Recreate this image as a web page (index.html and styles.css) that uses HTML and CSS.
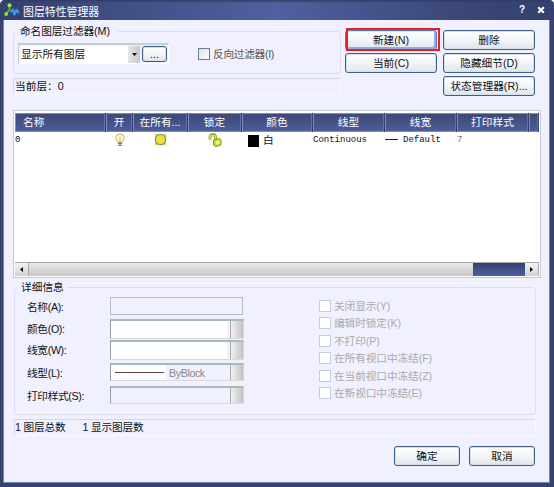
FILE: index.html
```html
<!DOCTYPE html>
<html lang="zh-CN">
<head>
<meta charset="utf-8">
<title>图层特性管理器</title>
<link rel="stylesheet" href="styles.css">
</head>
<body>
<div class="window">
  <header class="titlebar">
    <svg class="logo" width="16" height="16" viewBox="0 0 16 16"><path d="M5.500 3v6M5 8L2.500 11.500" fill="none" stroke="#4fae3a" stroke-width="2"/><circle cx="5.500" cy="3.200" r="2" fill="#a4e83c"/><circle cx="2.200" cy="12" r="1.900" fill="#8fdc3a"/><path d="M6.500 10l2.500-2.500 1.500 5L12.500 8l2.500 3" fill="none" stroke="#3399ec" stroke-width="2.300" stroke-linejoin="round"/></svg>
    <h1>图层特性管理器</h1>
    <span class="help">?</span>
    <svg class="close" width="8" height="8" viewBox="0 0 8 8"><path d="M1.200 1.200l5.600 5.600M6.800 1.200L1.200 6.800" stroke="#fff" stroke-width="2.200"/></svg>
  </header>
  <main>
    <section class="top">
      <div class="top-left">
        <fieldset class="filter">
          <legend>命名图层过滤器(M)</legend>
          <div class="filter-row">
            <div class="select-wrap">
              <div class="select"><span>显示所有图层</span><i class="drop"><svg width="5" height="3"><path d="M0 0h5L2.500 3z"/></svg></i></div>
              <button class="more">...</button>
            </div>
            <label class="invert"><i class="box dark"></i>反向过滤器(I)</label>
          </div>
        </fieldset>
        <div class="panel current">当前层：<span class="zero">0</span></div>
      </div>
      <div class="actions">
        <button class="primary">新建(N)</button>
        <button>删除</button>
        <button>当前(C)</button>
        <button>隐藏细节(D)</button>
        <button class="last">状态管理器(R)...</button>
      </div>
    </section>

    <section class="list">
      <div class="cols head">
        <span class="first">名称</span><span>开</span><span>在所有...</span><span>锁定</span><span>颜色</span><span>线型</span><span>线宽</span><span>打印样式</span><span></span>
      </div>
      <div class="cols row">
        <span class="mono">0</span>
        <span class="icon"><svg width="12" height="14" viewBox="0 0 12 14"><path d="M4 9L2.200 6.500C1 3.500 3 1.200 6 1.200s5 2.300 3.800 5.300L8 9z" fill="#fffbd0" stroke="#c9bc84" stroke-width="1.200"/><path d="M5.200 4L6 8l.8-4" fill="none" stroke="#f0d860"/><path d="M4 10.300h4M4.500 12.200h3" stroke="#70708a" stroke-width="1.500"/></svg></span>
        <span class="icon"><svg width="13" height="13" viewBox="0 0 13 13"><path d="M.5.500h3v3h-3zM9.500.500h3v3h-3zM.5 9.500h3v3h-3zM9.500 9.500h3v3h-3z" fill="#eee254"/><circle cx="6.500" cy="6.500" r="5.200" fill="#f7e02c" stroke="#62a58e" stroke-width="1.300"/></svg></span>
        <span class="icon"><svg width="14" height="14" viewBox="0 0 14 14"><path d="M2 6.500V4c0-3 5.500-3 5.500 0v4" fill="none" stroke="#8a981e" stroke-width="2.800"/><path d="M2 6V4c0-2.200 5.500-2.200 5.500 0v3" fill="none" stroke="#dce866" stroke-width="1.200"/><path d="M5.500 7l5-1.500L13 6.500v5.500L8 13.500 5.500 12z" fill="#d2d832" stroke="#87951b"/><path d="M8 8.500l3.500-1v3L8 11.500z" fill="#f4f08a"/></svg></span>
        <span class="color"><i></i>白</span>
        <span class="mono">Continuous</span>
        <span class="mono weight"><i></i>Default</span>
        <span class="mono gray">7</span>
      </div>
      <div class="scroll">
        <span class="arrow"><svg width="3" height="5"><path d="M3 0v5L0 2.500z"/></svg></span>
        <span class="track"></span>
        <span class="rest"></span>
        <span class="arrow"><svg width="3" height="5"><path d="M0 0v5l3-2.500z"/></svg></span>
      </div>
    </section>

    <fieldset class="details">
      <legend>详细信息</legend>
      <div class="detail-cols">
        <div class="form">
          <span>名称(A):</span><div class="field text"></div>
          <span>颜色(O):</span><div class="field combo white tall"><b></b><i></i></div>
          <span>线宽(W):</span><div class="field combo white tall"><b></b><i></i></div>
          <span>线型(L):</span><div class="field combo"><b class="line"><u></u></b><em>ByBlock</em><i></i></div>
          <span>打印样式(S):</span><div class="field combo"><b></b><i></i></div>
        </div>
        <div class="checks">
          <label><i class="box"></i>关闭显示(Y)</label>
          <label><i class="box"></i>编辑时锁定(K)</label>
          <label><i class="box"></i>不打印(P)</label>
          <label><i class="box"></i>在所有视口中冻结(F)</label>
          <label><i class="box"></i>在当前视口中冻结(Z)</label>
          <label><i class="box"></i>在新视口中冻结(E)</label>
        </div>
      </div>
    </fieldset>

    <div class="panel status"><span>1 图层总数</span><span>1 显示图层数</span></div>
    <footer><button>确定</button><button>取消</button></footer>
  </main>
</div>
</body>
</html>
```
FILE: styles.css
```css
* { box-sizing: border-box; }
body {
  margin: 0;
  background: #fff;
  color: #111;
  font: 10.7px/14px "Liberation Sans", "Noto Sans CJK SC", sans-serif;
  white-space: nowrap;
}
.window {
  display: flex;
  flex-direction: column;
  width: 554px;
  height: 487px;
  padding: 0 4px 4px 3px;
  background: #36436f;
  border-radius: 5px 5px 0 0;
  overflow: hidden;
}
.titlebar {
  display: flex;
  align-items: center;
  height: 20px;
  margin: 0 -4px 0 -3px;
  padding: 0 9px 0 4px;
  background: linear-gradient(#303c66, transparent 3px), linear-gradient(90deg, #34416e, #5060a0 50%, #3a4675 85%, #34416e);
  color: #fff;
}
.logo { margin-right: 3px; }
h1 { margin: 3px auto 0 0; font: inherit; font-size: 10.9px; }
.help { margin-right: 12px; font-weight: bold; font-size: 10px; }
main {
  flex: 1;
  padding: 4px 8px 0 9px;
  background: #f0f0fe;
  border: 1px solid #7584bd;
  border-top: 0;
}
fieldset {
  min-width: 0;
  margin: 0;
  padding: 0;
  border: 1px solid #dcdde5;
  border-radius: 4px;
}
legend { margin-left: 2px; padding: 0 4px; height: 14px; }
.top { display: flex; height: 86px; }
.top-left { width: 328px; }
.filter { height: 50px; }
.filter legend { padding-right: 8px; letter-spacing: -0.1px; }
.filter-row { display: flex; align-items: center; padding: 5px 0 0 4px; }
.select-wrap {
  display: flex;
  width: 151px;
  height: 21px;
  padding: 1px 1px 0 2px;
  border: 1px solid #fff;
  border-top: 2px solid #c5d0d2;
  border-left: 1px solid #c5d0d2;
  gap: 2px;
}
.select { display: flex; flex: 1; background: #fff; line-height: 17px; height: 17px; }
.select span { flex: 1; padding-left: 0; }
.drop { width: 12px; display: flex; align-items: center; justify-content: center; background: linear-gradient(90deg, #e6e6e6, #c8c8c8); }
button {
  height: 20px;
  padding: 0 0 1px;
  border: 1px solid #3d6088;
  border-radius: 3px;
  background: linear-gradient(#fff, #f3f5f9 50%, #dce5ec);
  box-shadow: inset 0 0 0 1px #d5e1e9;
  color: #111;
  font: inherit;
  line-height: 18px;
}
.more { width: 25px; height: 16px; line-height: 15px; }
.invert { display: flex; align-items: center; margin: 1px 0 0 29px; color: #555; letter-spacing: -0.3px; }
.box { width: 12px; height: 12px; margin-right: 3px; background: #fff; border: 1px solid #c0cfdc; }
.box.dark { border-color: #648096; background: linear-gradient(135deg, #dedee6, #fff); }
.panel {
  border: 1px solid #fafaff;
  border-top-color: #d0dadd;
  border-left-color: #d6dce1;
  padding-left: 1px;
}
.current { height: 17px; margin-top: 4px; line-height: 15px; }
.zero { font-family: "Liberation Sans"; }
.actions {
  display: grid;
  grid-template-columns: 92px 92px;
  grid-auto-rows: 20px;
  gap: 3px 6px;
  margin: 6px 0 0 4px;
  align-content: start;
}
.primary {
  position: relative;
  border-color: #557cad;
  box-shadow: inset -2px -2px #8eaee0, inset 0 0 0 1px #d5e1f4;
}
.primary::after {
  content: "";
  position: absolute;
  inset: -3px -4px -2px 0;
  border: 2px solid #ed1c24;
}
.last { grid-column: 2; }
.list {
  display: flex;
  flex-direction: column;
  width: 528px;
  height: 168px;
  padding: 2px 1px 1px;
  border: 1px solid #c4cad4;
  background: #fff;
}
.cols { display: grid; grid-template-columns: 91px 27px 55px 54px 71px 72px 72px 72px 1fr; }
.head { height: 19px; background: #34406b; color: #fff; text-align: center; line-height: 15px; }
.head span { border: 1px solid #7e8bc0; border-right-color: #6472a8; margin: 0 1px 0 0; background: linear-gradient(#3c4877, #4e5d99); overflow: hidden; padding-top: 1px; }
.head .first { text-align: left; padding-left: 7px; }
.row { height: 15px; align-items: center; }
.row .mono { font: 9px/14px "Liberation Mono", monospace; }
.icon { display: flex; justify-content: center; }
.color { display: flex; align-items: center; padding-left: 6px; }
.color i { width: 11px; height: 12px; margin: 3px 4px 0 0; background: #000; }
.weight { display: flex; align-items: center; }
.weight i { width: 13px; height: 1px; background: #222; margin-right: 5px; }
.gray { color: #777; }
.scroll { display: flex; height: 14px; margin-top: auto; border-top: 1px solid #aaa; background: #ddd; }
.arrow { width: 14px; display: flex; align-items: center; justify-content: center; background: linear-gradient(#f2f2f2, #d3d3d3); border-right: 1px solid #aaa; }
.track { flex: 1; background: linear-gradient(#e8e8e8, #c7c7c7); }
.rest { width: 52px; background: linear-gradient(#334070, #5060a0); }
.details { width: 522px; height: 135px; margin: 2px 0 0 1px; }
.detail-cols { display: flex; padding-left: 12px; }
.form {
  display: grid;
  grid-template-columns: 83px 134px;
  grid-template-rows: 22px 21px 23px 23px 18px;
  align-items: start;
  margin-top: 3px;
}
.form span { padding-top: 3px; letter-spacing: -0.35px; }
.field { height: 18px; border: 1px solid #b6bccc; }
.text { width: 133px; }
.combo { display: flex; border-color: #a9b8bb #d5d5dc #d5dadc #91a0a4; border-top-width: 2px; }
.tall { height: 20px; }
.combo b { flex: 1; margin-right: 3px; }
.white b { background: #fff; }
.combo i { width: 13px; border-left: 1px solid #aaa; background: linear-gradient(90deg, #f0f0f0, #c4c4c4); }
.combo .line { flex: none; width: 55px; background: #fff; display: flex; align-items: center; justify-content: flex-end; padding-right: 2px; }
.line u { width: 49px; height: 1px; background: #6c3f46; }
.combo em { flex: 1; color: #888; font-style: normal; line-height: 17px; letter-spacing: -0.4px; }
.checks { display: grid; grid-auto-rows: 17.500px; align-content: start; margin: 3px 0 0 75px; color: #aaa; letter-spacing: -0.1px; }
.checks label { display: flex; align-items: center; }
.status { display: flex; gap: 17px; width: 522px; height: 17px; margin: 4px 0 0 1px; padding: 0; line-height: 14px; letter-spacing: -0.2px; }
footer { display: flex; justify-content: flex-end; gap: 9px; margin-top: 10px; padding-right: 6px; }
footer button { width: 66px; }
```
